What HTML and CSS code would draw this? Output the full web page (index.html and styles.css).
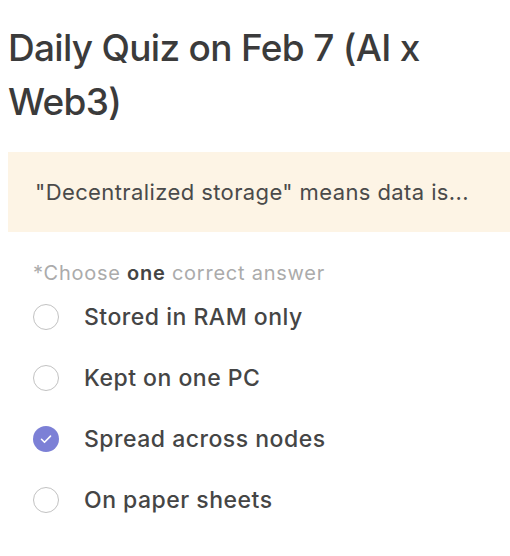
FILE: index.html
```html
<!DOCTYPE html>
<html>
<head>
<meta charset="utf-8">
<link rel="stylesheet" href="styles.css">
</head>
<body>
<div class="page">
  <h1 class="title">Daily Quiz on Feb 7 (AI x Web3)</h1>
  <div class="question">"Decentralized storage" means data is...</div>
  <div class="hint">*Choose <b>one</b> correct answer</div>
  <ul class="options">
    <li class="option"><span class="radio"></span><span class="label">Stored in RAM only</span></li>
    <li class="option"><span class="radio"></span><span class="label">Kept on one PC</span></li>
    <li class="option"><span class="radio checked"><svg viewBox="0 0 26 26" width="26" height="26"><path d="M8.5 13.3l3 3 6-6.2" fill="none" stroke="#fff" stroke-width="1.6" stroke-linecap="round" stroke-linejoin="round"/></svg></span><span class="label">Spread across nodes</span></li>
    <li class="option"><span class="radio"></span><span class="label">On paper sheets</span></li>
  </ul>
</div>
</body>
</html>
```
FILE: styles.css
```css
html, body {
  margin: 0;
  padding: 0;
  background: #fff;
}
body {
  font-family: Inter, "Noto Sans", sans-serif;
  color: #3f3f3f;
}
.page {
  padding: 0 0 0 8px;
}
.title {
  margin: 0;
  padding-top: 21px;
  font-size: 37px;
  line-height: 54px;
  font-weight: 500;
  color: #3b3b3b;
  letter-spacing: -0.7px;
  width: 440px;
}
.question {
  margin-top: 23px;
  background: #fdf4e5;
  height: 80px;
  display: flex;
  align-items: center;
  padding-left: 27px;
  font-size: 22px;
  letter-spacing: 0.4px;
  color: #4a4a4a;
}
.hint {
  margin-top: 30px;
  padding-left: 25px;
  font-size: 20px;
  letter-spacing: 0.75px;
  color: #ababab;
  line-height: 22px;
}
.hint b {
  font-weight: 600;
  color: #444;
}
.options {
  list-style: none;
  margin: 2px 0 0 0;
  padding: 0 0 0 25px;
}
.option {
  display: flex;
  align-items: center;
  height: 61px;
}
.radio {
  width: 26px;
  height: 26px;
  box-sizing: border-box;
  border: 1.8px solid #c2c2c2;
  border-radius: 50%;
  flex: none;
  display: flex;
  align-items: center;
  justify-content: center;
}
.radio.checked {
  border: none;
  background: #7c80d6;
}
.label {
  margin-left: 25px;
  font-size: 23px;
  font-weight: 500;
  color: #454545;
  letter-spacing: 0.5px;
}
```
